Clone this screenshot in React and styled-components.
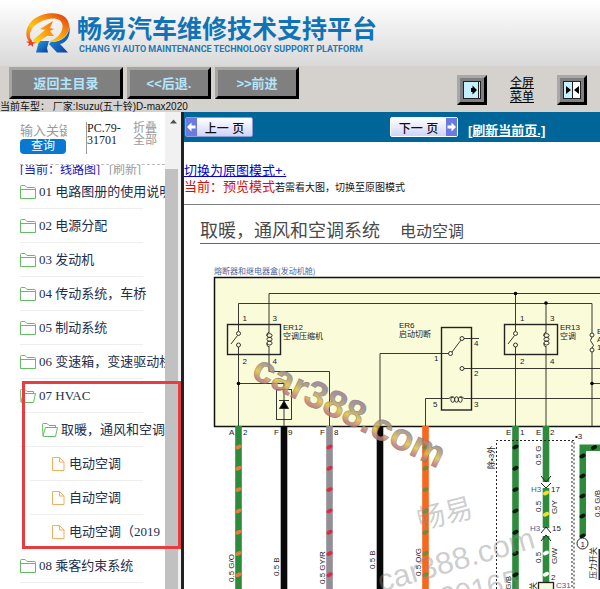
import React from "react";
import styled, { createGlobalStyle, css } from "styled-components";

const sans = `"Liberation Sans", "Noto Sans CJK SC", sans-serif`;
const serif = `"Liberation Serif", "Noto Sans CJK SC", serif`;

const GlobalStyle = createGlobalStyle`
  * { box-sizing: border-box; }
  body { margin: 0; background: #fff; font-family: ${sans}; }
  button, input, textarea { font-family: inherit; margin: 0; padding: 0; }
`;

const Page = styled.div`
  display: flex;
  flex-direction: column;
  height: 100vh;
  overflow: hidden;
`;

/* ---------- banner ---------- */
const Banner = styled.header`
  display: flex;
  align-items: flex-start;
  flex: none;
  gap: 6px;
  height: 66px;
  padding: 12px 0 0 24px;
  background: linear-gradient(#ffffff, #d9d9da);
`;
const Brand = styled.div`
  display: flex;
  flex-direction: column;
  white-space: nowrap;
`;
const BrandName = styled.h1`
  margin: 0;
  font: bold 25px/30px "Noto Sans CJK SC", sans-serif;
  color: #1173b5;
`;
const BrandSub = styled.p`
  margin: 0;
  padding-left: 2px;
  font: bold 9px/14px Roboto, sans-serif;
  color: #2678b2;
`;

/* ---------- toolbar ---------- */
const Toolbar = styled.div`
  display: flex;
  justify-content: space-between;
  flex: none;
  height: 46px;
  overflow: hidden;
  background: #d5d2cd;
`;
const ToolbarLeft = styled.div`
  display: flex;
  flex-direction: column;
`;
const ButtonRow = styled.div`
  display: flex;
  gap: 4px;
  padding: 1px 0 0 9px;
`;
const NavButton = styled.button`
  width: ${(p) => (p.$wide ? 114 : 84)}px;
  height: 32px;
  padding-bottom: 2px;
  border: 3px solid;
  border-color: #a5a5a5 #000 #000 #a5a5a5;
  background: #808080;
  color: #b4e4fa;
  font-size: 13px;
  font-weight: bold;
  white-space: nowrap;
`;
const VehicleInfo = styled.p`
  margin: 0;
  padding-top: 2px;
  font-size: 10px;
  line-height: 12px;
  color: #111;
  white-space: nowrap;
`;
const ToolbarRight = styled.div`
  display: flex;
  align-items: flex-start;
  gap: 19px;
  padding: 9px 13px 0 0;
`;
const IconButton = styled.button`
  display: flex;
  align-items: center;
  justify-content: center;
  width: 30px;
  height: 30px;
  border: 3px solid;
  border-color: #a8a8a8 #000 #000 #a8a8a8;
  background: #808080;
`;
const FullScreenLink = styled.a`
  width: 32px;
  padding: 1px 0 0;
  text-align: center;
  font-size: 12px;
  line-height: 14px;
  color: #000;
  text-decoration: underline;
`;

/* ---------- sidebar ---------- */
const Body = styled.div`
  display: flex;
  flex: 1;
  min-height: 0;
`;
const Sidebar = styled.aside`
  position: relative;
  display: flex;
  flex: none;
  width: 184px;
  font-family: ${serif};
  border-right: 3px solid #222;
`;
const SideContent = styled.div`
  flex: 1;
  min-width: 0;
  padding-left: 20px;
  overflow: hidden;
`;
const SearchArea = styled.form`
  display: flex;
  height: 53px;
  padding-top: 10px;
  border-bottom: 1px dashed #bbb;
`;
const SearchBox = styled.div`
  display: flex;
  flex-direction: column;
  flex: none;
  width: 47px;
`;
const SearchInput = styled.input`
  width: 47px;
  height: 17px;
  border: 0;
  background: transparent;
  font-size: 13px;
  &::placeholder { color: #999; opacity: 1; }
`;
const SearchButton = styled.button`
  width: 46px;
  height: 15px;
  border: 0;
  border-radius: 4px;
  background: #0878d0;
  color: #fff;
  font-size: 12px;
  line-height: 15px;
`;
const CodeBox = styled.textarea`
  flex: none;
  width: 36px;
  height: 32px;
  margin-left: 19px;
  border: 0;
  border-left: 1px solid #999;
  background: transparent;
  color: #222;
  font-size: 12px;
  line-height: 12px;
  resize: none;
  overflow: hidden;
`;
const FoldLink = styled.a`
  width: 26px;
  margin-left: 11px;
  font-size: 12px;
  line-height: 12px;
  color: #999;
  text-decoration: none;
`;
const ModeLine = styled.div`
  display: flex;
  align-items: center;
  gap: 9px;
  height: 10px;
  overflow: hidden;
  font-size: 12px;
  line-height: 10px;
  white-space: nowrap;
`;
const ModeLink = styled.a`
  color: ${(p) => (p.$muted ? "#999" : "#1a10cc")};
  text-decoration: none;
`;
const Tree = styled.ul`
  margin: 0;
  padding: 0;
  list-style: none;
`;
const levels = [
  css`padding-left: 0;`,
  css`padding-left: 22px;`,
  css`margin-left: 10px; padding-left: 21px;`,
];
const TreeRow = styled.li`
  display: flex;
  align-items: center;
  gap: 3px;
  height: 34px;
  margin-right: 22px;
  border-bottom: 1px solid #eeeeee;
  white-space: nowrap;
  ${(p) => levels[p.$level]}
  svg { flex: none; }
`;
const TreeLink = styled.a`
  color: #1d2f4d;
  font-size: 13px;
  line-height: 18px;
  text-decoration: none;
`;
const ScrollTrack = styled.div`
  display: flex;
  flex-direction: column;
  align-items: center;
  gap: 44px;
  flex: none;
  width: 16px;
  padding-top: 6px;
  background: #f1f1f1;
`;
const ScrollThumb = styled.div`
  flex: 1;
  width: 13px;
  margin-right: 3px;
  background: #c1c1c1;
`;
const Highlight = styled.div`
  position: absolute;
  top: 269px;
  left: 22px;
  right: 0;
  height: 168px;
  border: 3px solid #e73c40;
  pointer-events: none;
`;

/* ---------- main ---------- */
const Main = styled.main`
  flex: 1;
  min-width: 0;
  overflow: hidden;
`;
const PageBar = styled.nav`
  display: flex;
  align-items: center;
  height: 30px;
  padding-left: 1px;
  background: #006699;
`;
const PagerButton = styled.button`
  display: flex;
  flex-direction: ${(p) => (p.$next ? "row-reverse" : "row")};
  align-items: center;
  width: 68px;
  height: 20px;
  border: 1px solid ${(p) => (p.$next ? "#fff" : "#8d9bd8")};
  border-radius: 2px;
  background: linear-gradient(#fff, #cfd4fa);
  color: #111;
  font-size: 12px;
  font-weight: 500;
  white-space: nowrap;
`;
const PagerText = styled.span`
  flex: 1;
  text-align: center;
`;
const PagerGap = styled.div`
  flex: 0 0 137px;
`;
const RefreshLink = styled.a`
  margin-left: 10px;
  padding-top: 5px;
  color: #fff;
  font-size: 13px;
  font-weight: bold;
  white-space: nowrap;
`;
const ModeInfo = styled.section`
  height: 63px;
  padding-top: 21px;
  border-bottom: 1px solid #808080;
  font-size: 13px;
  line-height: 16px;
  white-space: nowrap;
`;
const SwitchLink = styled.a`
  display: block;
  width: max-content;
  color: #0000d8;
`;
const Current = styled.span`
  color: #d01010;
`;
const Hint = styled.span`
  color: #111;
  font-size: 10px;
`;
const DrawingTitle = styled.h2`
  display: flex;
  align-items: baseline;
  gap: 20px;
  height: 39px;
  margin: 0 0 0 16px;
  padding-top: 12px;
  border-bottom: 1px solid #666;
  color: #4a4a4a;
  font-size: 18px;
  font-weight: 400;
  line-height: 28px;
  white-space: nowrap;
`;
const SystemName = styled.span`
  font-size: 16px;
`;
const Drawing = styled.svg`
  display: block;
  margin-top: 20px;
`;

/* ---------- icons ---------- */
const LogoIcon = () => (
  <svg width="47" height="42" viewBox="0 0 47 42" aria-hidden="true">
    <defs>
      <linearGradient id="swoosh" x1="0" y1="1" x2="1" y2="0">
        <stop offset="0" stopColor="#f04a18" />
        <stop offset="0.35" stopColor="#ffc414" />
        <stop offset="0.65" stopColor="#f58a10" />
        <stop offset="1" stopColor="#d92f12" />
      </linearGradient>
      <linearGradient id="leg" x1="0" y1="0" x2="1" y2="1">
        <stop offset="0" stopColor="#25a0e8" />
        <stop offset="1" stopColor="#0a3c98" />
      </linearGradient>
      <linearGradient id="bolt" x1="1" y1="0" x2="0" y2="1">
        <stop offset="0" stopColor="#f46a10" />
        <stop offset="1" stopColor="#ffe018" />
      </linearGradient>
    </defs>
    <path d="M27 30 C38 30 45 24 45.500 14 C47 25 42 31 36 32 L44 40.500 H33 L25 32Z" fill="url(#leg)" />
    <path d="M15 29 L25 29 L23 36 L24 40.500 H12Z" fill="url(#leg)" />
    <path d="M6 31 C-3 21 5 4 24 1.500 C38 0 46 6 45 16 C44 26 34 30.500 24 30 C33 27 39 21 38.500 13.500 C38 6 28 4.500 18 9 C7 14 3 23 8 29Z" fill="url(#swoosh)" />
    <path d="M29 9 L16 17 L21 18 L9 28 C12 33 15 32 17 28 L23 24 L30 24 L26 19 L30 17 L26 16Z" fill="url(#bolt)" />
    <path d="M7 27 L8 30 L12 30.500 L9 32 L9 35 L7 33 L4 34 L5 31.500 L2 29.500 L5.500 29.500Z" fill="#e8432a" />
  </svg>
);
const FolderIcon = () => (
  <svg width="16" height="14" viewBox="0 0 16 14" fill="none" stroke="#62bd62" aria-hidden="true">
    <path d="M0.5 13.5 V1.5 Q0.5 0.5 1.5 0.5 H5 L7 2.5 H14.5 Q15.5 2.5 15.5 3.5 V13.5Z M0.5 4.5 H15.5" />
  </svg>
);
const FolderOpenIcon = () => (
  <svg width="16" height="14" viewBox="0 0 16 14" fill="none" stroke="#62bd62" aria-hidden="true">
    <path d="M1 13 L0.5 1.5 Q0.5 0.5 1.5 0.5 H5 L7 2.5 H13.5 V4.5 M1 13 L3.5 4.5 H15.5 L13.5 13.5 H1.5Z" />
  </svg>
);
const FileIcon = () => (
  <svg width="15" height="16" viewBox="0 0 15 16" fill="none" stroke="#f5ad62" aria-hidden="true">
    <path d="M1.5 1.5 H8.5 L13 6 V14.5 H1.5Z M8.5 1.5 V6 H13" />
  </svg>
);
const PagerArrow = ({ flip }) => (
  <svg width="11" height="18" viewBox="0 0 11 18" aria-hidden="true">
    <rect width="11" height="18" fill="#6a7ae0" />
    <path d={flip ? "M10 9 L5.500 4.500 V7.500 H1.500 V10.500 H5.500 V13.500Z" : "M1 9 L5.500 4.500 V7.500 H9.500 V10.500 H5.500 V13.500Z"} fill="#fff" />
  </svg>
);
const ShowPaneIcon = () => (
  <svg width="18" height="18" viewBox="0 0 18 18" aria-hidden="true">
    <rect x="0.5" y="0.5" width="17" height="17" fill="#c5f0fb" stroke="#222" />
    <path d="M15.5 1 V17" stroke="#222" />
    <path d="M8 7 H9.500 V4.500 L14 9 L9.500 13.500 V11 H8Z" fill="#000" />
  </svg>
);
const SplitPaneIcon = () => (
  <svg width="18" height="18" viewBox="0 0 18 18" aria-hidden="true">
    <rect x="0.5" y="0.5" width="17" height="17" fill="#fff" stroke="#222" />
    <rect x="1" y="1" width="8" height="16" fill="#c5f0fb" />
    <path d="M9.500 1 V17" stroke="#222" />
    <path d="M3 5 L8 9 L3 13Z M16 5 L11 9 L16 13Z" fill="#000" />
  </svg>
);

/* ---------- wiring drawing ---------- */
const Mark = ({ x, y, color }) => (
  <ellipse cx={x} cy={y} rx="3.2" ry="2" fill={color} transform={`rotate(-28 ${x} ${y})`} />
);
const Wire = ({ x, y1 = 426, y2 = 600, color, mark, first = 447 }) => {
  const marks = [];
  if (mark) for (let y = first; y < y2; y += 21.3) marks.push(y);
  return (
    <g>
      <rect x={x - 3.3} y={y1} width="6.600" height={y2 - y1} fill={color} />
      {marks.map((y) => <Mark key={y} x={x} y={y} color={mark} />)}
    </g>
  );
};
const Relay = ({ x }) => (
  <g>
    <rect x={x - 11} y="324.500" width="53" height="30" strokeWidth="1.400" />
    <path d={`M${x - 1} 335.500 L${x - 7.5} 344`} />
    <circle cx={x} cy="333.500" r="2" fill="#fafbd8" />
    <circle cx={x} cy="345" r="2" fill="#fafbd8" />
    <path d={`M${x + 30.5} 332 q-3 1.500 -2 4 M${x + 28.5} 343 q-1 3 2 4`} />
    {[335.5, 339.3, 343.1].map((y) => <ellipse key={y} cx={x + 31} cy={y} rx="2.6" ry="1.9" />)}
  </g>
);
const labels = [
  [242.5, 321, "1"], [272.5, 321, "3"], [242.5, 364, "2"], [272.5, 364, "4"],
  [283, 330, "ER12"], [283, 339, "空调压缩机"],
  [399, 328, "ER6"], [399, 337, "启动切断"],
  [474, 346, "4"], [434, 361, "1"], [474, 376, "2"], [433, 407, "5"], [474, 407, "3"],
  [520, 321, "1"], [550, 321, "3"], [520, 364, "2"], [550, 364, "4"],
  [560, 330, "ER13"], [560, 339, "空调"],
  [597, 334, "E"], [597, 342, "A"], [597, 350, "1"],
  [229, 435, "A"], [243, 435, "2"], [274, 435, "F"], [288, 435, "9"],
  [320, 435, "F"], [334, 435, "8"], [506, 435, "E"], [520, 435, "1"],
  [536, 435, "E"], [550, 435, "2"], [575, 439, "•3"],
  [551, 492, "17"], [552, 531, "15"], [551, 580, "2"],
];
const verticals = [
  [234, 582, "0.5 G/O"], [279, 576, "0.5 B"], [325, 584, "0.5 GY/R"], [375, 569, "0.5 B"],
  [421, 576, "0.5 O/G"], [511, 603, "0.5 G/B"], [494, 469, "除•3外"],
  [541, 465, "0.5 G"], [541, 512, "0.5"], [557, 514, "G/Y"], [541, 563, "0.5"],
  [557, 564, "G/W"], [536, 590, "关"], [600, 517, "0.5 G/B"], [596, 579, "压力开关"],
];
const green = "#2f8b3c";

const WiringDrawing = () => (
  <Drawing width="416" height="325" viewBox="184 264 416 325" role="img" aria-label="电动空调电路图">
    <defs>
      <linearGradient id="rainbow" x1="0" y1="0" x2="0" y2="1">
        <stop offset="0" stopColor="#a86a80" />
        <stop offset="0.3" stopColor="#8f8494" />
        <stop offset="0.45" stopColor="#b09a70" />
        <stop offset="0.6" stopColor="#dcc444" />
        <stop offset="0.75" stopColor="#c07a74" />
        <stop offset="1" stopColor="#8468ac" />
      </linearGradient>
    </defs>
    <text x="214" y="274" fontSize="8" fill="#4b66a0" fontFamily='"Noto Sans CJK SC", sans-serif'>熔断器和继电器盒(发动机舱)</text>
    <rect x="214.500" y="277.500" width="400" height="149" fill="#fafbd8" stroke="#111" strokeWidth="1.500" />
    <g fill="none" stroke="#222" strokeWidth="0.9">
      <path d="M269 333 V293.500 H600 M238.500 331 V303.500 H592 V333 M238.500 347 V426 M269 346 V371.500 H329.500 V426 M238.500 383.500 H284 V426" />
      <path d="M515.500 293 V331 M515.500 347 V426 M546 303 V333 M546 346 V426" />
      <Relay x={238.5} />
      <Relay x={515.5} />
      <rect x="276.500" y="389.500" width="15" height="30" />
      <path d="M279 400.500 H289" />
      <path d="M284 401 L279.500 408.500 H288.500Z" fill="#000" />
      <rect x="441.500" y="327.500" width="30" height="82.500" strokeWidth="1.400" />
      <path d="M464 338.500 H479 M449 353.500 H380 V426 M452 352 L461 340 M464 368.500 H600 M425.500 426 V398.500 H449 q2 -3 4 -1 M460 397.500 q2 -2 4 1 H600" />
      {[452.7, 456.5, 460.3].map((x) => <ellipse key={x} cx={x} cy="399.500" rx="1.900" ry="2.800" />)}
      <circle cx="462" cy="338.500" r="2" fill="#fafbd8" />
      <circle cx="450.500" cy="353.500" r="2" fill="#fafbd8" />
      <circle cx="462" cy="368.500" r="2" fill="#fafbd8" />
      <path d="M592 337 q-3 4 0 6 q3 2 0 5 M592 352 V426 M592 383.500 H600" />
      <circle cx="592" cy="335" r="2" fill="#fafbd8" />
      <circle cx="592" cy="350" r="2" fill="#fafbd8" />
    </g>
    <g fill="#000">
      <circle cx="238.500" cy="383.500" r="1.800" />
      <circle cx="515.500" cy="293.500" r="1.800" />
      <circle cx="546" cy="303" r="1.800" />
      <circle cx="592" cy="383.500" r="1.800" />
    </g>
    <Wire x={238.5} color={green} mark="#e2803a" />
    <Wire x={284} color="#080808" />
    <Wire x={329.5} color="#929096" mark="#e12a42" />
    <Wire x={380} color="#080808" />
    <Wire x={425.5} color="#f8671f" mark="#6d8c38" />
    <Wire x={515.5} color={green} mark="#06180a" />
    <Wire x={546} y2={482} color={green} />
    <Wire x={546} y1={488} y2={528} color={green} mark="#f0e02c" first={493} />
    <Wire x={546} y1={536} y2={582} color={green} mark="#fff" first={553} />
    <path d="M579.500 536 V444.500 H601 V451 H586 V536Z" fill={green} />
    {[456, 476, 496, 516, 536].map((y) => <Mark key={y} x={582.5} y={y} color="#06180a" />)}
    <Mark x={594} y={447.5} color="#06180a" />
    <g fill="none" stroke="#222">
      <path d="M541 476 L546 482 L551 476 M541 483 L546 488 L551 483 M541 533 L546 527 L551 533 M541 541 L546 535 L551 541" />
      <path d="M496.500 589 V440.500 H574 V589 M572 441 V589" strokeDasharray="2 2" />
      <rect x="538.500" y="582.500" width="15" height="12" fill="#fafbd8" strokeWidth="1.300" />
      <circle cx="582.500" cy="543.500" r="5.500" fill="#fff" />
      <path d="M599.500 549 V580" strokeWidth="2" />
    </g>
    <g fontSize="8" fill="#222" fontFamily='"Liberation Sans", "Noto Sans CJK SC", sans-serif'>
      {labels.map(([x, y, t]) => <text key={`${x}-${y}`} x={x} y={y}>{t}</text>)}
      {verticals.map(([x, y, t]) => <text key={`${x}-${y}`} transform={`translate(${x} ${y}) rotate(-90)`}>{t}</text>)}
      <text x="580.500" y="546.500">1</text>
      <g fill="#3c5a9a">
        <text x="531" y="492">H3</text>
        <text x="530" y="531">H3</text>
        <text x="556" y="588">C31</text>
      </g>
    </g>
    <g fontFamily='"Liberation Sans", "Noto Sans CJK SC", sans-serif' fill="#888" fillOpacity="0.42">
      <text fontSize="28" transform="translate(420 530) rotate(-14)">畅易</text>
      <text fontSize="31" transform="translate(381 592) rotate(-16)">car388.com</text>
      <text fontSize="29" transform="translate(427 612) rotate(-14)">020165</text>
    </g>
    <text fontFamily='"Liberation Sans", sans-serif' fontWeight="bold" fontSize="38" fill="url(#rainbow)" fillOpacity="0.85" stroke="#847070" strokeOpacity="0.7" strokeWidth="0.6" transform="translate(250 377) rotate(26)">car388.com</text>
  </Drawing>
);

const tree = [
  [0, "folder", "01 电路图册的使用说明"],
  [0, "folder", "02 电源分配"],
  [0, "folder", "03 发动机"],
  [0, "folder", "04 传动系统，车桥"],
  [0, "folder", "05 制动系统"],
  [0, "folder", "06 变速箱，变速驱动桥"],
  [0, "open", "07 HVAC"],
  [1, "open", "取暖，通风和空调系统"],
  [2, "file", "电动空调"],
  [2, "file", "自动空调"],
  [2, "file", "电动空调（2019"],
  [0, "folder", "08 乘客约束系统"],
];
const treeIcons = { folder: FolderIcon, open: FolderOpenIcon, file: FileIcon };

export default function App() {
  return (
    <Page>
      <GlobalStyle />
      <Banner>
        <LogoIcon />
        <Brand>
          <BrandName>畅易汽车维修技术支持平台</BrandName>
          <BrandSub>CHANG YI AUTO MAINTENANCE TECHNOLOGY SUPPORT PLATFORM</BrandSub>
        </Brand>
      </Banner>
      <Toolbar>
        <ToolbarLeft>
          <ButtonRow>
            <NavButton $wide>返回主目录</NavButton>
            <NavButton>&lt;&lt;后退.</NavButton>
            <NavButton>&gt;&gt;前进</NavButton>
          </ButtonRow>
          <VehicleInfo>当前车型： 厂家:Isuzu(五十铃)D-max2020</VehicleInfo>
        </ToolbarLeft>
        <ToolbarRight>
          <IconButton aria-label="显示菜单"><ShowPaneIcon /></IconButton>
          <FullScreenLink href="#full">全屏<br />菜单</FullScreenLink>
          <IconButton aria-label="分栏"><SplitPaneIcon /></IconButton>
        </ToolbarRight>
      </Toolbar>
      <Body>
        <Sidebar>
          <SideContent>
            <SearchArea onSubmit={(e) => e.preventDefault()}>
              <SearchBox>
                <SearchInput placeholder="输入关键字" aria-label="关键字" />
                <SearchButton>查询</SearchButton>
              </SearchBox>
              <CodeBox aria-label="编号" defaultValue={"PC.79-\n31701"} />
              <FoldLink href="#fold">折叠全部</FoldLink>
            </SearchArea>
            <ModeLine>
              <ModeLink href="#current">[当前：线路图]</ModeLink>
              <ModeLink href="#reload" $muted>[刷新]</ModeLink>
            </ModeLine>
            <Tree>
              {tree.map(([level, kind, label], i) => {
                const Icon = treeIcons[kind];
                return (
                  <TreeRow key={i} $level={level}>
                    <Icon />
                    <TreeLink href={`#node-${i}`}>{label}</TreeLink>
                  </TreeRow>
                );
              })}
            </Tree>
          </SideContent>
          <ScrollTrack>
            <svg width="7" height="7" viewBox="0 0 7 7" aria-hidden="true"><path d="M0 5.500 L3.500 1.500 L7 5.500Z" fill="#505050" /></svg>
            <ScrollThumb />
          </ScrollTrack>
          <Highlight />
        </Sidebar>
        <Main>
          <PageBar>
            <PagerButton><PagerArrow /><PagerText>上一 页</PagerText></PagerButton>
            <PagerGap />
            <PagerButton $next><PagerArrow flip /><PagerText>下一 页</PagerText></PagerButton>
            <RefreshLink href="#refresh">[刷新当前页.]</RefreshLink>
          </PageBar>
          <ModeInfo>
            <SwitchLink href="#original">切换为原图模式+.</SwitchLink>
            <Current>当前：预览模式</Current><Hint>若需看大图，切换至原图模式</Hint>
          </ModeInfo>
          <DrawingTitle>取暖，通风和空调系统<SystemName>电动空调</SystemName></DrawingTitle>
          <WiringDrawing />
        </Main>
      </Body>
    </Page>
  );
}
